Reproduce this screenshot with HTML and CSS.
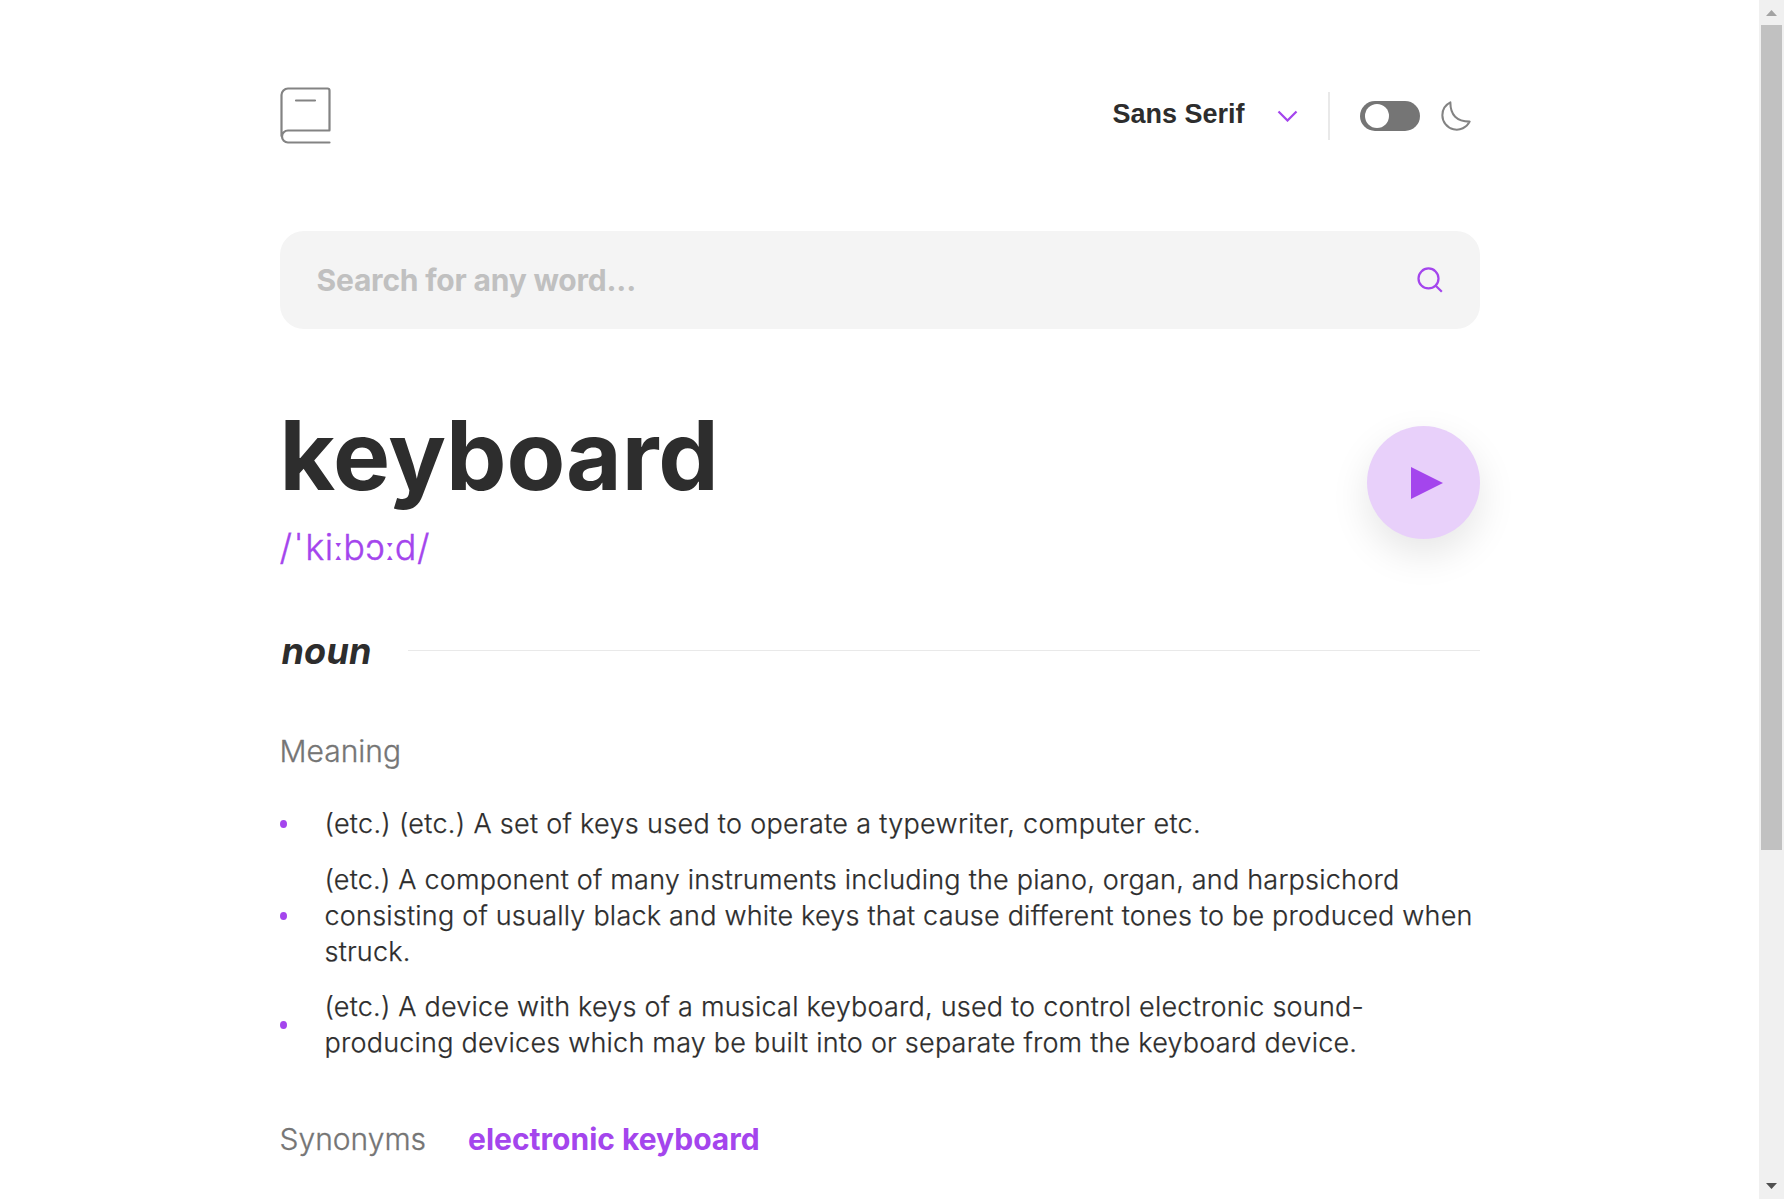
FILE: index.html
```html
<!DOCTYPE html>
<html lang="en">
<head>
<meta charset="utf-8">
<title>Dictionary</title>
<link rel="stylesheet" href="styles.css">
</head>
<body>
<div class="app">
  <main class="page">
    <header class="header">
      <svg class="logo" width="51" height="57" viewBox="0 0 51 57" fill="none" stroke="#838383" stroke-width="2.2" stroke-linecap="round" stroke-linejoin="round"><path d="M49.5 43V3.5a2 2 0 0 0-2-2H8a6.500 6.500 0 0 0-6.500 6.500V49M49.500 43.500H8a6 6 0 0 0 0 12H49.500M16 13.500H35"/></svg>
      <div class="controls">
        <button class="font-picker"><span class="font-name">Sans Serif</span>
          <svg width="21" height="12" viewBox="0 0 21 12" fill="none" stroke="#a445ed" stroke-width="2.25"><path d="m1.500 1.500 9 9 9-9"/></svg>
        </button>
        <span class="divider"></span>
        <span class="toggle"><span class="knob"></span></span>
        <svg class="moon" viewBox="0 0 22 22" fill="none" stroke="#838383" stroke-width="1.5" stroke-linejoin="round"><path d="M1 10.449a10.544 10.544 0 0 0 19.993 4.686C11.544 15.135 6.858 10.448 6.858 1A10.545 10.545 0 0 0 1 10.449Z"/></svg>
      </div>
    </header>
    <form class="search">
      <span class="placeholder">Search for any word...</span>
      <svg width="27" height="27" viewBox="0 0 18 18" fill="none" stroke="#a445ed" stroke-width="1.5"><path d="m12.663 12.663 3.887 3.887M1 7.664a6.665 6.665 0 1 0 13.330 0 6.665 6.665 0 1 0-13.330 0Z"/></svg>
    </form>
    <section class="word">
      <div>
        <h1>keyboard</h1>
        <p class="phonetic">/<span class="stress">ˈ</span>ki<span class="long">ː</span>bɔ<span class="long">ː</span>d/</p>
      </div>
      <button class="play" aria-label="Play"><svg width="32" height="32" viewBox="0 0 32 32" fill="#a445ed"><path d="M0 0v32l32-16z"/></svg></button>
    </section>
    <div class="part"><h2>noun</h2><span class="rule"></span></div>
    <h3 class="label">Meaning</h3>
    <ul class="meanings">
      <li class="loose"><span class="dot"></span><span>(etc.) (etc.) A set of keys used to operate a typewriter, computer etc.</span></li>
      <li><span class="dot"></span><span>(etc.) A component of many instruments including the piano, organ, and harpsichord consisting of usually black and white keys that cause different tones to be produced when struck.</span></li>
      <li><span class="dot"></span><span>(etc.) A device with keys of a musical keyboard, used to control electronic sound-producing devices which may be built into or separate from the keyboard device.</span></li>
    </ul>
    <div class="synonyms"><h3 class="label">Synonyms</h3><a>electronic keyboard</a></div>
  </main>
  <div class="scrollbar">
    <svg width="25" height="25" viewBox="0 0 25 25" fill="#a3a3a3"><path d="M7 16 12.500 10 18 16z"/></svg>
    <span class="thumb"></span>
    <svg class="down" width="25" height="25" viewBox="0 0 25 25" fill="#505050"><path d="M7 9 12.500 15 18 9z"/></svg>
  </div>
</div>
</body>
</html>
```
FILE: styles.css
```css
* { box-sizing: border-box; margin: 0; padding: 0; }
body { height: 1199px; overflow: hidden; background: #fff; color: #2d2d2d; font-family: Inter, sans-serif; }
button { border: 0; background: none; font: inherit; color: inherit; }
svg { display: block; flex: none; }
.app { display: flex; height: 1199px; }
.page { width: 1200px; margin: 0 auto; padding-top: 87px; }
.header { display: flex; justify-content: space-between; height: 57px; }
.controls { display: flex; align-items: center; height: 58px; padding-right: 9px; }
.font-picker { display: flex; align-items: center; gap: 32px; }
.font-name { font-family: "Liberation Sans", Arial, sans-serif; font-size: 27px; font-weight: 700; line-height: 36px; padding-bottom: 4px; }
.divider { width: 2px; height: 48px; margin: 0 30px; background: #e9e9e9; }
.toggle { width: 60px; height: 30px; padding: 3px 5px; border-radius: 15px; background: #757575; }
.knob { display: block; width: 24px; height: 24px; border-radius: 50%; background: #fff; }
.moon { margin-left: 21px; width: 30px; height: 30px; }
.search { display: flex; align-items: center; justify-content: space-between; height: 98px; margin-top: 87px; padding: 0 35.5px 0 37px; border-radius: 24px; background: #f4f4f4; }
.placeholder { font-size: 30px; font-weight: 700; letter-spacing: -0.2px; color: #c0c0c0; }
.word { display: flex; justify-content: space-between; margin-top: 68px; height: 173px; }
h1 { font-size: 96px; line-height: 116px; font-weight: 700; letter-spacing: -0.15px; }
.phonetic { margin-top: 12px; font-size: 36px; line-height: 44px; font-weight: 300; letter-spacing: 0.7px; color: #a445ed; -webkit-text-stroke: 0.4px #a445ed; }
.stress { margin: 0 3px; }
.long { font-family: "Noto Sans", sans-serif; font-size: 31px; line-height: 1; margin: 0 -0.9px; -webkit-text-stroke: 0; }
.play { display: flex; align-items: center; width: 113px; height: 113px; margin-top: 29px; padding-left: 44px; border-radius: 50%; background: #e8d0fa; box-shadow: 0 15px 38px rgba(0,0,0,.1); }
.part { display: flex; align-items: center; gap: 36px; height: 44px; margin-top: 59px; }
h2 { padding-left: 2px; font-size: 36px; font-weight: 700; font-style: italic; line-height: 44px; letter-spacing: 0.2px; }
.rule { flex: 1; height: 1px; margin-bottom: 2px; background: #e9e9e9; }
.label { font-size: 30px; font-weight: 300; line-height: 36px; color: #757575; -webkit-text-stroke: 0.3px #757575; }
.part + .label { margin-top: 60px; }
.meanings { list-style: none; margin-top: 37px; display: grid; gap: 19.5px; }
.meanings li { display: flex; align-items: center; gap: 38px; font-size: 27px; line-height: 36px; font-weight: 300; letter-spacing: 0.22px; -webkit-text-stroke: 0.25px #2d2d2d; }
.meanings .loose { letter-spacing: 0.31px; }
.dot { flex: none; width: 7px; height: 8px; border-radius: 50%; background: #a445ed; }
.synonyms { display: flex; gap: 42px; margin-top: 60px; }
.synonyms a { font-size: 30px; line-height: 36px; font-weight: 700; color: #a445ed; }
.scrollbar { display: flex; flex-direction: column; align-items: center; width: 25px; height: 1199px; background: #f0f0f0; }
.thumb { width: 21px; height: 825px; background: #c1c1c1; }
.down { margin-top: auto; }
```
